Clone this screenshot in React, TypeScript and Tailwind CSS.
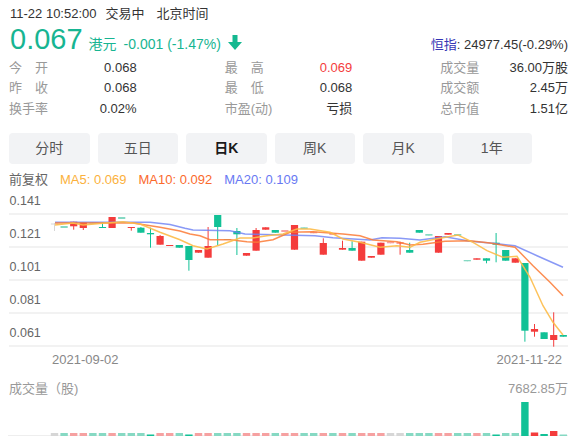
import React from "react";

type Kind = "u" | "d" | "U" | "D" | "n";

const fills: Record<Kind, string> = {
  u: "#f43c3c",
  d: "#11c196",
  U: "#f6a1a1",
  D: "#86d9c3",
  n: "#d6d6d6",
};

// [bodyTop, bodyBottom, high, low, kind] in chart pixels
const candles: [number, number, number, number, Kind][] = [
  [34.5, 35, 34, 42, "n"],
  [37, 39, 37, 39, "D"],
  [32.7, 37.3, 32.7, 40.7, "u"],
  [33, 39, 33, 41, "u"],
  [33.5, 34.5, 33.5, 34.5, "D"],
  [38, 39, 33, 39, "d"],
  [28, 39, 28, 39, "u"],
  [28, 30, 28, 30, "D"],
  [38, 39, 38, 41.7, "u"],
  [38.7, 43.7, 38, 43.7, "d"],
  [44, 45.3, 38.7, 58.7, "d"],
  [47, 55.7, 46, 55.7, "u"],
  [56, 57, 56, 57, "u"],
  [56, 58.7, 56, 58.7, "d"],
  [57, 71, 57, 81.7, "d"],
  [61, 63.7, 61, 63.7, "u"],
  [57, 68.7, 38, 68.7, "u"],
  [26, 38, 26, 56, "d"],
  [50, 51, 50, 51, "D"],
  [42, 45.3, 39, 66, "d"],
  [64, 66.7, 64, 66.7, "u"],
  [41, 61.7, 39, 61.7, "u"],
  [38.3, 40.7, 38.3, 40.7, "u"],
  [41, 43.7, 41, 43.7, "d"],
  [41, 43, 41, 43, "U"],
  [36, 60.7, 36, 60.7, "u"],
  [38.3, 40, 38.3, 40, "D"],
  [42.7, 44.3, 42.7, 44.3, "U"],
  [54, 65.7, 49.3, 65.7, "u"],
  [44.3, 46, 44.3, 46, "U"],
  [59, 60.7, 51.7, 60.7, "u"],
  [59, 61.7, 52.3, 61.7, "d"],
  [52.7, 71.7, 52.7, 71.7, "u"],
  [67, 68.7, 67, 68.7, "u"],
  [53.7, 65.7, 53.7, 65.7, "u"],
  [52.7, 54.3, 52.7, 54.3, "U"],
  [53.5, 54.5, 52.7, 65.7, "u"],
  [61, 63.7, 53.7, 63.7, "d"],
  [41, 43.7, 41, 43.7, "d"],
  [45, 46.7, 45, 46.7, "D"],
  [47, 63.7, 47, 63.7, "u"],
  [44, 45.7, 44, 45.7, "u"],
  [45, 46.7, 45, 46.7, "D"],
  [71, 72.3, 71, 72.3, "D"],
  [69.3, 70.7, 69.3, 70.7, "u"],
  [69.3, 71.7, 69.3, 74.3, "d"],
  [53.7, 55.7, 44, 73.3, "d"],
  [61, 71.7, 61, 71.7, "d"],
  [69.3, 73.7, 69.3, 73.7, "u"],
  [74, 141.7, 74, 152.7, "d"],
  [140, 142.7, 135, 147.7, "u"],
  [143.3, 150, 143.3, 150, "d"],
  [146, 151, 123.3, 157.7, "u"],
  [146, 147.7, 146, 147.7, "d"],
];

const volumes: [number, Kind][] = [
  [3, "n"], [3, "D"], [3, "U"], [3, "U"], [3, "D"], [3, "D"], [3, "U"], [3, "D"], [3, "D"], [3, "D"],
  [1.5, "d"], [3, "U"], [3, "U"], [3, "D"], [1.5, "d"], [3, "U"], [3, "U"], [3, "D"], [3, "D"], [3, "D"],
  [3, "U"], [3, "U"], [3, "U"], [3, "D"], [3, "U"], [3, "U"], [3, "D"], [3, "D"], [3, "U"], [3, "D"],
  [3, "U"], [3, "D"], [3, "U"], [3, "U"], [3, "U"], [3, "n"], [3, "n"], [3, "D"], [3, "D"], [3, "D"],
  [3, "U"], [3, "U"], [3, "D"], [3, "D"], [3, "U"], [3, "D"], [1.5, "d"], [3, "D"], [3, "D"], [34, "d"],
  [3.5, "u"], [2, "d"], [5, "u"], [1.5, "D"],
];

const ma20 = [
  [55, 33.3], [150, 33.3], [170, 35.5], [185, 39.3], [193, 41], [230, 41.7], [245, 45], [315, 46.7],
  [333, 48.7], [370, 51], [382, 48.7], [400, 49.3], [420, 51], [445, 47.7], [470, 52.3], [493, 54.3],
  [515, 56.7], [537, 66.7], [563, 78.3],
];
const ma10 = [
  [55, 34], [133, 34], [160, 38.3], [180, 42], [190, 45], [200, 46.7], [210, 50.7], [230, 50.7],
  [247, 52.7], [257, 53.3], [273, 50.7], [290, 43.3], [313, 42.7], [330, 44], [343, 45], [360, 46.7],
  [373, 51], [397, 52.7], [410, 56], [423, 55.3], [445, 52.3], [470, 51.7], [490, 54], [515, 58.3],
  [533, 76.7], [550, 93.3], [563, 106.7],
];
const ma5 = [
  [55, 36], [73, 34], [83, 36], [103, 34.3], [123, 32.7], [140, 35], [160, 43.3], [180, 50.7],
  [193, 56.7], [207, 60], [223, 55], [240, 49], [252, 49], [267, 46.7], [283, 45], [297, 40],
  [310, 40], [330, 43.3], [343, 50], [360, 53.3], [380, 58.3], [397, 56.7], [410, 58.3], [420, 53.3],
  [440, 49.3], [458, 46], [473, 53.3], [487, 61.7], [503, 68.3], [517, 67.3], [530, 88.3],
  [543, 116.7], [553, 133.3], [563, 146],
];

const xAt = (i: number) => 54.5 + 9.6 * i;
const pts = (p: number[][]) => p.map(([x, y]) => `${x},${y}`).join(" ");

const stats = [
  ["今　开", "0.068", "最　高", "0.069", "成交量", "36.00万股"],
  ["昨　收", "0.068", "最　低", "0.068", "成交额", "2.45万"],
  ["换手率", "0.02%", "市盈(动)", "亏损", "总市值", "1.51亿"],
];

const tabs = ["分时", "五日", "日K", "周K", "月K", "1年"];

const App = () => {
  return (
    <div className="w-[578px] h-[437px] overflow-hidden bg-white font-['Liberation_Sans','Noto_Sans_CJK_SC',sans-serif]">
      {/* Header */}
      <div className="pt-[5px] px-[10px] h-[22px] text-[13px] leading-[17px] text-[#333] flex">
        <span>11-22 10:52:00</span>
        <span className="ml-[9px]">交易中</span>
        <span className="ml-[12px]">北京时间</span>
      </div>

      <div className="h-[34px] px-[10px] flex items-baseline">
        <span className="text-[29px] leading-[34px] text-[#17b592]">0.067</span>
        <span className="ml-[6px] text-[14px] text-[#17b592]">港元</span>
        <span className="ml-[7px] text-[14px] text-[#17b592]">-0.001 (-1.47%)</span>
        <svg width="14" height="15" viewBox="0 0 14 15" className="ml-[7px] translate-y-[1px]">
          <path d="M4.5 0H9.5V7H14L7 15L0 7H4.5Z" fill="#14b890" />
        </svg>
        <span className="ml-auto text-[13px] text-[#333]">
          <span className="text-[#3535b5]">恒指</span>: 24977.45(-0.29%)
        </span>
      </div>

      {/* Stats */}
      <div className="mt-[1px] pl-[9px] pr-[10px] grid grid-cols-3 gap-x-[88px] text-[13px]">
        {stats.map((row, r) =>
          [0, 2, 4].map((c) => (
            <div key={`${r}-${c}`} className="h-[20.5px] flex items-center justify-between">
              <span className="text-[#999]">{row[c]}</span>
              <span className={row[c + 1] === "0.069" ? "text-[#f43c3c]" : "text-[#333]"}>{row[c + 1]}</span>
            </div>
          ))
        )}
      </div>

      {/* Tabs */}
      <div className="mt-[14px] px-[9px] flex gap-[8px]">
        {tabs.map((t) => (
          <div
            key={t}
            className={`w-[80.5px] h-[31px] rounded-[4px] bg-[#f2f3f5] flex items-center justify-center text-[14px] ${
              t === "日K" ? "font-bold text-[#1a1a1a]" : "text-[#555]"
            }`}
          >
            {t}
          </div>
        ))}
      </div>

      {/* Legend */}
      <div className="mt-[7px] h-[18px] px-[9px] flex items-center gap-[12px] text-[13px]">
        <span className="text-[#666]">前复权</span>
        <span className="text-[#fbb13c]">MA5: 0.069</span>
        <span className="text-[#fb6a2c]">MA10: 0.092</span>
        <span className="text-[#6879f3]">MA20: 0.109</span>
      </div>

      {/* Price chart */}
      <svg width="578" height="162" className="block">
        {[25, 58, 91, 124, 157].map((y, i) => (
          <g key={y}>
            <line x1="9" x2="568" y1={y} y2={y} stroke="#f2f2f2" strokeWidth="2" />
            <text x="9.5" y={y - 12} dominantBaseline="middle" fontSize="12.5" fill="#666">
              {["0.141", "0.121", "0.101", "0.081", "0.061"][i]}
            </text>
          </g>
        ))}
        {candles.map(([top, bottom, high, low, k], i) => {
          const x = xAt(i);
          return (
            <g key={i}>
              <line x1={x} x2={x} y1={high} y2={low} stroke={fills[k]} strokeWidth="1" />
              <rect x={x - 3.6} y={top} width="7.2" height={Math.max(bottom - top, 1)} fill={fills[k]} />
            </g>
          );
        })}
        <polyline points={pts(ma20)} fill="none" stroke="#6b80f4" strokeOpacity="0.8" strokeWidth="1.5" />
        <polyline points={pts(ma10)} fill="none" stroke="#fb7a35" strokeOpacity="0.85" strokeWidth="1.5" />
        <polyline points={pts(ma5)} fill="none" stroke="#fdbb48" strokeOpacity="0.9" strokeWidth="1.5" />
      </svg>

      {/* Date axis */}
      <div className="h-[19px] flex items-center text-[13px] text-[#888]">
        <span className="ml-[52px]">2021-09-02</span>
        <span className="ml-auto mr-[16px]">2021-11-22</span>
      </div>

      {/* Volume */}
      <div className="mt-[10px] h-[18px] pl-[9px] pr-[10px] flex items-center justify-between text-[13px] text-[#999]">
        <span>成交量（股)</span>
        <span>7682.85万</span>
      </div>
      <svg width="578" height="38" className="block">
        <line x1="8" x2="568" y1="37.5" y2="37.5" stroke="#eeeeee" strokeWidth="1" />
        {volumes.map(([h, k], i) => (
          <rect key={i} x={xAt(i) - 3.7} y={38 - h} width="7.4" height={h} fill={fills[k]} />
        ))}
      </svg>
    </div>
  );
};

export default App;
